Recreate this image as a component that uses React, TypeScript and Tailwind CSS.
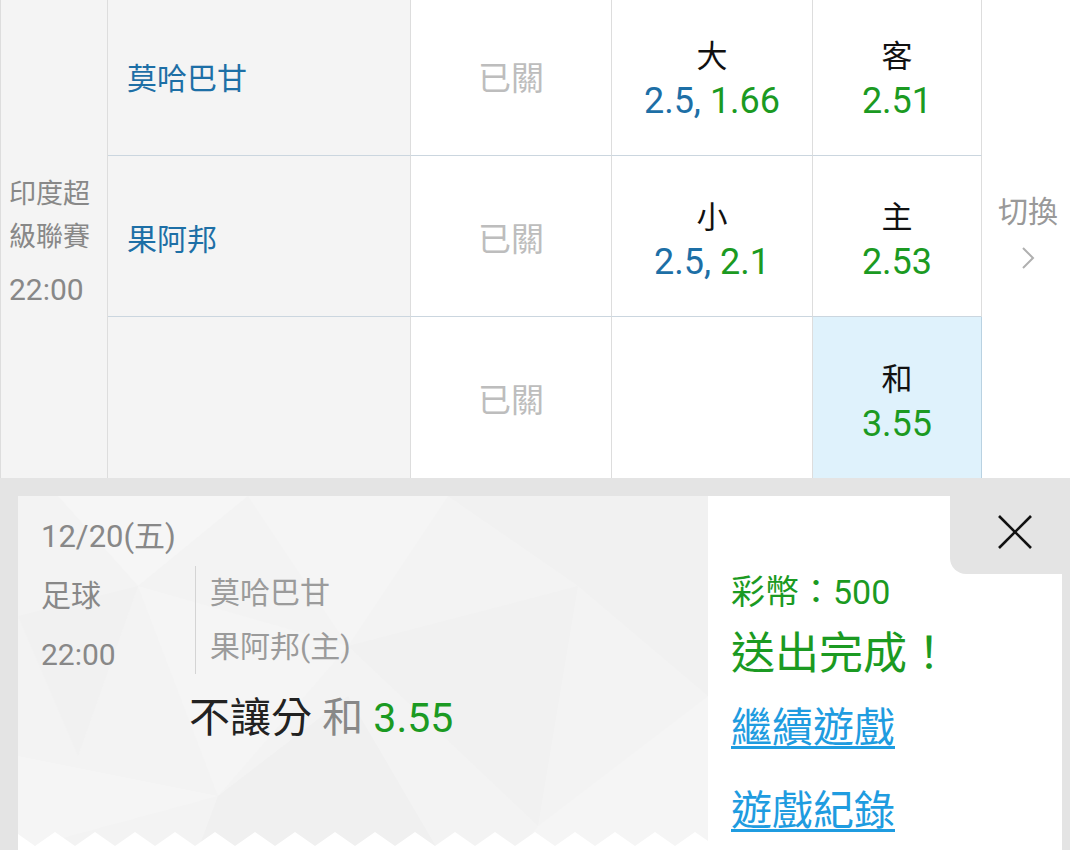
import { FC } from "react";

const green = "text-[#1b9a22]";
const blue = "text-[#1d6fa6]";

const OddsCell: FC<{ label: string; children: React.ReactNode; hot?: boolean; last?: boolean }> = ({
	label,
	children,
	hot,
	last,
}) => {
	return (
		<div
			className={
				"flex flex-col items-center justify-center pt-[8px] border-r " +
				(last ? "" : "border-b border-b-[#cbd6df] ") +
				(hot ? "bg-[#dff2fc] border-r-[#b9d2e2]" : "bg-white border-r-[#dddddd]")
			}
		>
			<div className="text-[31px] leading-[44px] text-[#111]">{label}</div>
			<div className="text-[36px] leading-[44px]">{children}</div>
		</div>
	);
};

const zigzag = () => {
	let pts = "0,18 ";
	for (let x = -23; x <= 720; x += 40) {
		pts += x + ",14 " + (x + 20) + ",0 ";
	}
	pts += "720,18";
	return pts;
};

const App: FC = () => {
	return (
		<div className="w-[1070px] h-[850px] overflow-hidden bg-white font-[family-name:Roboto,'Noto_Sans_CJK_TC',sans-serif]">
			{/* odds table */}
			<div className="-mt-[5px] grid grid-cols-[108px_303px_201px_201px_169px_1fr] grid-rows-[161px_161px_161px]">
				<div className="row-span-3 bg-[#f4f4f4] border-l border-r border-[#dddddd] flex flex-col justify-center pl-[8px] pt-[10px] text-[27px] text-[#888]">
					<div className="leading-[43px]">印度超</div>
					<div className="leading-[43px]">級聯賽</div>
					<div className="leading-[43px] mt-[9px] text-[30px]">22:00</div>
				</div>

				{/* row 1 */}
				<div className={"bg-[#f4f4f4] border-r border-r-[#dddddd] border-b border-b-[#cbd6df] flex items-center pl-[19px] pt-[7px] text-[30px] " + blue}>
					莫哈巴甘
				</div>
				<div className="bg-white border-r border-r-[#dddddd] border-b border-b-[#cbd6df] flex items-center justify-center pt-[7px] text-[33px] text-[#bdbdbd]">
					已關
				</div>
				<OddsCell label="大">
					<span className={blue}>2.5, </span>
					<span className={green}>1.66</span>
				</OddsCell>
				<OddsCell label="客">
					<span className={green}>2.51</span>
				</OddsCell>

				<div className="row-span-3 bg-white flex flex-col items-center justify-center pl-[4px] pb-[12px]">
					<div className="text-[30px] leading-[40px] text-[#999]">切換</div>
					<svg width="14" height="24" viewBox="0 0 14 24" className="mt-[14px]">
						<polyline points="2,2 12,12 2,22" fill="none" stroke="#b0b0b0" strokeWidth="2" />
					</svg>
				</div>

				{/* row 2 */}
				<div className={"bg-[#f4f4f4] border-r border-r-[#dddddd] border-b border-b-[#cbd6df] flex items-center pl-[19px] pt-[7px] text-[30px] " + blue}>
					果阿邦
				</div>
				<div className="bg-white border-r border-r-[#dddddd] border-b border-b-[#cbd6df] flex items-center justify-center pt-[7px] text-[33px] text-[#bdbdbd]">
					已關
				</div>
				<OddsCell label="小">
					<span className={blue}>2.5, </span>
					<span className={green}>2.1</span>
				</OddsCell>
				<OddsCell label="主">
					<span className={green}>2.53</span>
				</OddsCell>

				{/* row 3 */}
				<div className="bg-[#f4f4f4] border-r border-r-[#dddddd]"></div>
				<div className="bg-white border-r border-r-[#dddddd] flex items-center justify-center pt-[7px] text-[33px] text-[#bdbdbd]">
					已關
				</div>
				<div className="bg-white border-r border-r-[#dddddd]"></div>
				<OddsCell label="和" hot last>
					<span className={green}>3.55</span>
				</OddsCell>
			</div>

			{/* bet result panel */}
			<div className="bg-[#e4e4e4] pl-[18px] pr-[8px] pt-[18px] flex">
				<div className="relative w-[690px] h-[354px] bg-[#f3f3f3] overflow-hidden">
					<svg className="absolute inset-0" width="690" height="354" viewBox="0 0 690 354">
						<polygon points="40,0 230,0 120,90" fill="#f6f6f6" />
						<polygon points="0,120 120,90 60,260" fill="#f1f1f1" />
						<polygon points="230,0 430,0 330,150" fill="#f5f5f5" />
						<polygon points="430,0 690,0 690,200 560,90" fill="#f1f1f1" />
						<polygon points="120,90 330,150 200,300" fill="#f5f5f5" />
						<polygon points="330,150 560,90 520,330" fill="#f1f1f1" />
						<polygon points="0,260 200,300 0,354" fill="#f5f5f5" />
						<polygon points="200,300 330,200 420,354 180,354" fill="#f0f0f0" />
						<polygon points="520,330 690,200 690,354 500,354" fill="#f5f5f5" />
					</svg>
					<svg className="absolute left-0 bottom-0" width="690" height="18" viewBox="0 0 690 18">
						<polygon points={zigzag()} fill="#ffffff" />
					</svg>

					<div className="relative pl-[23px] pt-[22px]">
						<div className="text-[31px] leading-[38px] text-[#888]">12/20(五)</div>
						<div className="flex mt-[10px]">
							<div className="w-[154px] text-[30px] leading-[59px] text-[#888]">
								<div>足球</div>
								<div>22:00</div>
							</div>
							<div className="border-l border-[#d4d4d4] pl-[14px] text-[30px] leading-[54px] text-[#9b9b9b] h-[108px]">
								<div>莫哈巴甘</div>
								<div>果阿邦(主)</div>
							</div>
						</div>
						<div className="ml-[148px] mt-[10px] text-[41px] leading-[48px]">
							<span className="text-[#222]">不讓分 </span>
							<span className="text-[#888]">和 </span>
							<span className={green}>3.55</span>
						</div>
					</div>
				</div>

				<div className="flex-1 h-[354px] bg-white flex flex-col pl-[23px]">
					<div className="self-end -mt-[18px] -mr-[8px] w-[120px] h-[96px] bg-[#e4e4e4] rounded-bl-[16px] flex items-center justify-center pt-[12px] pl-[10px]">
						<svg width="38" height="38" viewBox="0 0 38 38">
							<line x1="3" y1="3" x2="35" y2="35" stroke="#111" strokeWidth="2.6" />
							<line x1="35" y1="3" x2="3" y2="35" stroke="#111" strokeWidth="2.6" />
						</svg>
					</div>
					<div className={"text-[34px] leading-[36px] " + green}>彩幣：500</div>
					<div className={"mt-[18px] text-[44px] leading-[52px] " + green}>送出完成！</div>
					<div className="mt-[24px] text-[41px] leading-[48px] text-[#1f9ce0] underline decoration-[3px] underline-offset-[4px]">
						繼續遊戲
					</div>
					<div className="mt-[35px] text-[41px] leading-[48px] text-[#1f9ce0] underline decoration-[3px] underline-offset-[4px]">
						遊戲紀錄
					</div>
				</div>
			</div>
		</div>
	);
};

export default App;
